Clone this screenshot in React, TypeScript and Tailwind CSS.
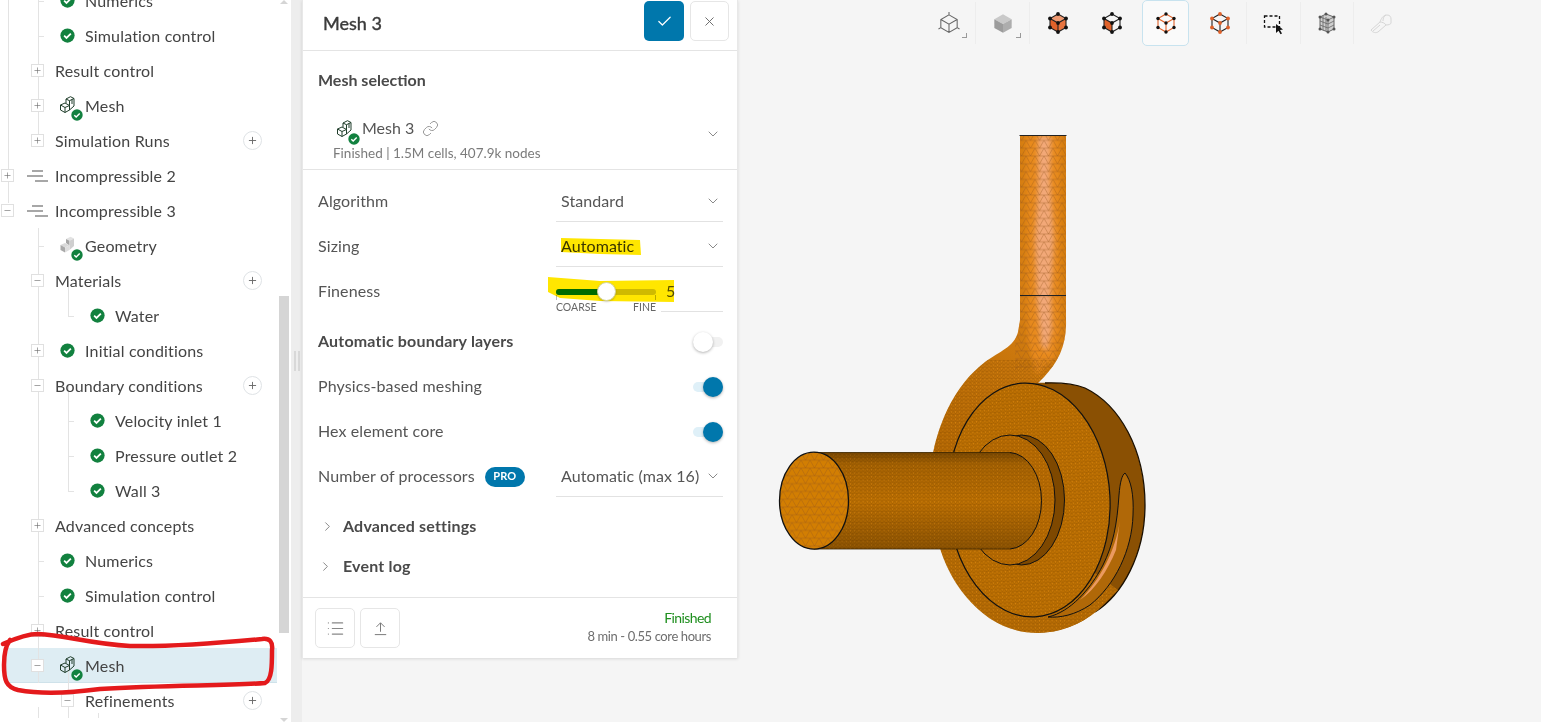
import { Check, ChevronDown, ChevronRight, Link, List, Minus, Plus, X } from "lucide-react";

const G0 = "left-[8px] top-0 bottom-0";
const G0_TOP = "left-[8px] top-0 h-[10px]";
const G1 = "left-[38px] top-0 bottom-0";
const G1_TOP = "left-[38px] top-0 h-1/2";
const G1_BOTTOM = "left-[38px] top-[24px] bottom-0";
const G2 = "left-[68px] top-0 bottom-0";
const G2_TOP = "left-[68px] top-0 h-1/2";
const G2_BOTTOM = "left-[68px] top-1/2 bottom-0";
const G3_BOTTOM = "left-[98px] top-[30px] bottom-0";

type Row = {
  label: string;
  level: 0 | 1 | 2;
  exp?: "+" | "-";
  icon?: "check" | "mesh" | "geo" | "sim";
  add?: boolean;
  selected?: boolean;
  guides: string[];
  elbow?: string;
};

const E1 = "left-[38px] w-[6px]";
const E2 = "left-[68px] w-[6px]";

const rows: Row[] = [
  { label: "Numerics", level: 1, icon: "check", guides: [G0, G1], elbow: E1 },
  { label: "Simulation control", level: 1, icon: "check", guides: [G0, G1], elbow: E1 },
  { label: "Result control", level: 1, exp: "+", guides: [G0, G1] },
  { label: "Mesh", level: 1, exp: "+", icon: "mesh", guides: [G0, G1] },
  { label: "Simulation Runs", level: 1, exp: "+", add: true, guides: [G0, G1_TOP] },
  { label: "Incompressible 2", level: 0, exp: "+", icon: "sim", guides: [G0] },
  { label: "Incompressible 3", level: 0, exp: "-", icon: "sim", guides: [G0_TOP] },
  { label: "Geometry", level: 1, icon: "geo", guides: [G1], elbow: E1 },
  { label: "Materials", level: 1, exp: "-", add: true, guides: [G1, G2_BOTTOM] },
  { label: "Water", level: 2, icon: "check", guides: [G1, G2_TOP], elbow: E2 },
  { label: "Initial conditions", level: 1, exp: "+", icon: "check", guides: [G1] },
  { label: "Boundary conditions", level: 1, exp: "-", add: true, guides: [G1, G2_BOTTOM] },
  { label: "Velocity inlet 1", level: 2, icon: "check", guides: [G1, G2], elbow: E2 },
  { label: "Pressure outlet 2", level: 2, icon: "check", guides: [G1, G2], elbow: E2 },
  { label: "Wall 3", level: 2, icon: "check", guides: [G1, G2_TOP], elbow: E2 },
  { label: "Advanced concepts", level: 1, exp: "+", guides: [G1] },
  { label: "Numerics", level: 1, icon: "check", guides: [G1], elbow: E1 },
  { label: "Simulation control", level: 1, icon: "check", guides: [G1], elbow: E1 },
  { label: "Result control", level: 1, exp: "+", guides: [G1] },
  { label: "Mesh", level: 1, exp: "-", icon: "mesh", selected: true, guides: [G1, G2_BOTTOM] },
  { label: "Refinements", level: 2, exp: "-", add: true, guides: [G1_BOTTOM, G2, G3_BOTTOM] },
];

const levelPad = { 0: "pl-[1px]", 1: "pl-[31px]", 2: "pl-[61px]" };

function CheckBadge({ className }: { className: string }) {
  return (
    <svg viewBox="0 0 16 16" className={className}>
      <circle cx="8" cy="8" r="7.6" fill="#12813f" />
      <path d="M4.4 8.2l2.5 2.4 4.7-4.6" fill="none" stroke="#fff" strokeWidth="1.9" />
    </svg>
  );
}

function MeshIcon() {
  return (
    <span className="relative block w-[22px] h-[22px]">
      <svg viewBox="0 0 15 17" className="w-[15px] h-[17px] mt-[2px]" fill="none" stroke="#1f3d2a" strokeWidth="1">
        <path d="M6 3l4.500-2.300L14 2.500 9.500 4.700zM6 3v4M9.500 4.700V9.500M14 2.500V10L9.500 14" />
        <path d="M.5 9L5 7l4.500 2.500L5 11.500zM.5 9v5L5 16.500V11.500M9.500 9.500V14L5 16.500M12 3.500V8" />
      </svg>
      <CheckBadge className="absolute left-[11px] top-[13px] w-[12px] h-[12px]" />
    </span>
  );
}

function GeoIcon() {
  return (
    <span className="relative block w-[22px] h-[22px]">
      <svg viewBox="0 0 15 17" className="w-[15px] h-[17px] mt-[2px]">
        <path d="M6 3l4.500-2.300L14 2.500 9.500 4.700z" fill="#e2e2e2" />
        <path d="M6 3v4l3.500 2.500V4.700z" fill="#a6a6a6" />
        <path d="M9.500 4.700L14 2.500V10l-4.500 4z" fill="#cfcfcf" />
        <path d="M.5 9L5 7l4.500 2.500L5 11.500z" fill="#d9d9d9" />
        <path d="M.5 9v5L5 16.500V11.500z" fill="#a9a9a9" />
        <path d="M5 11.500l4.500-2V14L5 16.500z" fill="#dedede" />
      </svg>
      <CheckBadge className="absolute left-[11px] top-[13px] w-[12px] h-[12px]" />
    </span>
  );
}

function SimIcon() {
  return (
    <svg viewBox="0 0 22 12" className="w-[22px] h-[12px] -ml-[3px]" stroke="#8a8a8a" strokeWidth="1.3">
      <path d="M5 1h11M0 6h16M8 11h13" />
    </svg>
  );
}

function TreeRow({ row }: { row: Row }) {
  return (
    <div className={`relative flex items-center h-[35px] text-[16px] tracking-[0.17px] text-[#444] ${levelPad[row.level]}`}>
      {row.selected && <div className="absolute left-[6px] right-[2px] top-0 bottom-0 bg-[#deedf3] border-b border-[#cfe2ea]" />}
      {row.guides.map((g) => (
        <span key={g} className={`absolute w-px bg-[#e3e3e3] ${g}`} />
      ))}
      {row.elbow && <span className={`absolute top-1/2 h-px bg-[#e3e3e3] ${row.elbow}`} />}
      <div className="relative w-[24px] shrink-0">
        {row.exp && (
          <span className="flex items-center justify-center w-[13px] h-[13px] bg-white border border-[#e0e0e0] text-[#666]">
            {row.exp === "+" ? <Plus size={9} strokeWidth={1.6} /> : <Minus size={9} strokeWidth={1.6} />}
          </span>
        )}
      </div>
      {row.icon && (
        <div className="relative ml-[5px] w-[25px] shrink-0">
          {row.icon === "check" && <CheckBadge className="w-[15px] h-[15px]" />}
          {row.icon === "mesh" && <MeshIcon />}
          {row.icon === "geo" && <GeoIcon />}
          {row.icon === "sim" && <SimIcon />}
        </div>
      )}
      <span className="relative whitespace-nowrap">{row.label}</span>
      {row.add && (
        <span className="absolute left-[243px] top-[8px] flex items-center justify-center w-[19px] h-[19px] rounded-full bg-white border border-[#dfe3e6] text-[#666]">
          <Plus size={11} strokeWidth={2} />
        </span>
      )}
    </div>
  );
}

function Sidebar() {
  return (
    <aside className="flex w-[291px] shrink-0 h-full bg-white">
      <div className="w-[279px] shrink-0 h-full overflow-hidden">
        <div className="-mt-[17px]">
          {rows.map((r, i) => (
            <TreeRow key={i} row={r} />
          ))}
        </div>
      </div>
      <div className="relative w-[10px] h-full">
        <span className="absolute left-[1px] top-0 w-0 h-0 border-x-[4px] border-x-transparent border-b-[4px] border-b-[#d5d5d5]" />
        <div className="mt-[296px] h-[337px] bg-[#d5d5d5]" />
        <span className="absolute left-[1px] bottom-0 w-0 h-0 border-x-[4px] border-x-transparent border-t-[4px] border-t-[#d5d5d5]" />
      </div>
    </aside>
  );
}

function Select({ value, highlight }: { value: string; highlight?: boolean }) {
  return (
    <div className={`flex items-center justify-between w-[167px] h-[41px] pl-[5px] pr-[2px] border-b border-[#e2e2e2] text-[16px] tracking-[0.08px] ${highlight ? "text-[#3a3a3a]" : "text-[#555]"}`}>
      <span className="whitespace-nowrap">{value}</span>
      <ChevronDown size={16} strokeWidth={1.3} className="text-[#777]" />
    </div>
  );
}

function Toggle({ on }: { on: boolean }) {
  return (
    <div className={`relative w-[30px] h-[10px] rounded-full ${on ? "bg-[#dff0f8]" : "bg-[#f1f1f1]"}`}>
      <span
        className={`absolute -top-[5px] w-[20px] h-[20px] rounded-full shadow-[0_1px_3px_rgba(0,0,0,0.3)] ${on ? "right-0 bg-[#0077ac]" : "left-0 bg-white"}`}
      />
    </div>
  );
}

function SettingRow({ label, bold, children, className }: { label: React.ReactNode; bold?: boolean; children: React.ReactNode; className?: string }) {
  return (
    <div className={`flex items-center justify-between h-[45px] ${className ?? ""}`}>
      <div className={`flex items-center -mt-[2px] text-[16px] ${bold ? "font-bold tracking-[0.18px] text-[#4a4a4a]" : "tracking-[0.11px] text-[#555]"}`}>{label}</div>
      {children}
    </div>
  );
}

function Panel() {
  return (
    <section className="flex flex-col w-[436px] shrink-0 h-[658px] bg-white border-x border-[#e8e8e8] shadow-[0_1px_3px_rgba(0,0,0,0.12)]">
      <header className="flex items-center justify-between h-[51px] pl-[20px] pr-[8px] border-b border-[#e4e4e4]">
        <h1 className="-mt-[4px] text-[18px] font-medium [-webkit-text-stroke:0.3px_#3c3c3c] text-[#3c3c3c]">Mesh 3</h1>
        <div className="flex gap-[6px] -mt-[8px]">
          <button className="flex items-center justify-center w-[40px] h-[40px] rounded-[5px] bg-[#0077ac] text-white">
            <Check size={17} strokeWidth={1.7} />
          </button>
          <button className="flex items-center justify-center w-[39px] h-[40px] rounded-[5px] bg-white border border-[#e6e6e6] text-[#666]">
            <X size={15} strokeWidth={1.5} />
          </button>
        </div>
      </header>

      <div className="h-[119px] border-b border-[#e4e4e4] px-[15px] pt-[19px]">
        <h2 className="h-[20px] leading-[20px] text-[16px] font-bold text-[#4a4a4a]">Mesh selection</h2>
        <div className="flex items-start justify-between pl-[15px] pr-[2px] mt-[28px]">
          <div>
            <div className="flex items-center h-[20px] text-[16px] text-[#555]">
              <span className="relative w-[29px] pl-[4px] h-[20px] shrink-0"><MeshIcon /></span>
              <span>Mesh 3</span>
              <Link size={17} strokeWidth={1.2} className="ml-[8px] text-[#888]" />
            </div>
            <p className="mt-[5px] text-[13.5px] leading-[20px] text-[#7b7b7b] whitespace-nowrap">Finished | 1.5M cells, 407.9k nodes</p>
          </div>
          <ChevronDown size={16} strokeWidth={1.3} className="text-[#777] mt-[8px] -mr-[1px]" />
        </div>
      </div>

      <div className="flex-1 pl-[15px] pr-[14px] pt-[9px]">
        <SettingRow label="Algorithm"><Select value="Standard" /></SettingRow>
        <SettingRow label="Sizing"><Select value="Automatic" highlight /></SettingRow>
        <SettingRow label="Fineness" className="mb-[5px]">
          <div className="flex w-[167px] h-[41px]">
            <div className="relative w-[100px] h-full">
              <div className="absolute left-0 top-[18px] w-full h-[6px] rounded-full bg-[#cfcfcf] overflow-hidden">
                <div className="w-[50px] h-full bg-[#0077ac]" />
              </div>
              <span className="absolute left-0 top-[24px] w-px h-[5px] bg-[#bbb]" />
              <span className="absolute right-0 top-[24px] w-px h-[5px] bg-[#bbb]" />
              <span className="absolute left-[41px] top-[11px] z-20 w-[19px] h-[19px] rounded-full bg-white border border-[#d6d6a0] shadow-[0_1px_2px_rgba(0,0,0,0.2)]" />
              <div className="absolute left-0 right-0 top-[30px] flex justify-between text-[10.5px] leading-[13px] text-[#666]">
                <span>COARSE</span>
                <span>FINE</span>
              </div>
            </div>
            <div className="ml-[5px] flex-1 border-b border-[#e2e2e2] pl-[5px] text-[16px] leading-[20px] pt-[10px] text-[#555]">5</div>
          </div>
        </SettingRow>
        <SettingRow label="Automatic boundary layers" bold><Toggle on={false} /></SettingRow>
        <SettingRow label="Physics-based meshing"><Toggle on /></SettingRow>
        <SettingRow label="Hex element core"><Toggle on /></SettingRow>
        <SettingRow
          label={
            <>
              Number of processors
              <span className="ml-[10px] mt-[2px] flex items-center justify-center w-[40px] h-[20px] rounded-full bg-[#0077ac] text-white text-[11px] font-bold">PRO</span>
            </>
          }
        >
          <Select value="Automatic (max 16)" />
        </SettingRow>
        <div className="flex items-center h-[40px] mt-[7px] text-[16px] font-bold tracking-[0.18px] text-[#4a4a4a]">
          <ChevronRight size={15} strokeWidth={1.4} className="ml-[2px] text-[#777]" />
          <span className="ml-[8px]">Advanced settings</span>
        </div>
        <div className="flex items-center h-[40px] text-[16px] font-bold tracking-[0.18px] text-[#4a4a4a]">
          <ChevronRight size={15} strokeWidth={1.4} className="text-[#777]" />
          <span className="ml-[10px]">Event log</span>
        </div>
      </div>

      <footer className="flex items-center justify-between h-[61px] pl-[12px] pr-[26px] border-t border-[#e4e4e4]">
        <div className="flex gap-[5px]">
          <button className="flex items-center justify-center w-[40px] h-[40px] rounded-[5px] border border-[#e6e6e6] text-[#888]">
            <List size={19} strokeWidth={1.5} />
          </button>
          <button className="flex items-center justify-center w-[40px] h-[40px] rounded-[5px] border border-[#e6e6e6] text-[#777]">
            <svg viewBox="0 0 16 18" className="w-[13px] h-[15px]" fill="none" stroke="currentColor" strokeWidth="1.2">
              <path d="M8 13V2M3 7l5-5 5 5M1 16.500h14" />
            </svg>
          </button>
        </div>
        <div className="text-right -mt-[3px]">
          <div className="text-[14px] leading-[19px] tracking-[-0.6px] text-[#1f8f1f]">Finished</div>
          <div className="text-[13px] leading-[19px] tracking-[-0.4px] text-[#6e6e6e]">8 min - 0.55 core hours</div>
        </div>
      </footer>
    </section>
  );
}

const DOTS: [number, number][] = [[12, 3], [20, 7.5], [20, 16.5], [12, 21], [4, 16.5], [4, 7.5], [12, 12]];

function Cube({ variant }: { variant: "solid" | "face" | "edges" | "points" }) {
  const edge = variant === "edges" ? "#e0622a" : "#222";
  const dot = variant === "points" ? "#e0622a" : "#111";
  return (
    <svg viewBox="0 0 24 24" className="w-[24px] h-[24px]">
      {variant === "solid" && (
        <>
          <path d="M12 3l8 4.500-8 4.500-8-4.500z" fill="#f09a72" />
          <path d="M4 7.500l8 4.500v9l-8-4.500z" fill="#e0622a" />
          <path d="M20 7.500l-8 4.500v9l8-4.500z" fill="#e87540" />
        </>
      )}
      {variant === "face" && <path d="M4 7.500l8 4.500v9l-8-4.500z" fill="#e0622a" />}
      <path d="M12 3l8 4.500v9L12 21l-8-4.500v-9zM4 7.500l8 4.500 8-4.500M12 12v9" fill="none" stroke={edge} strokeWidth="1.1" />
      {DOTS.map(([x, y]) => (
        <circle key={`${x}-${y}`} cx={x} cy={y} r={variant === "edges" ? 1.7 : 1.9} fill={dot} />
      ))}
    </svg>
  );
}

function Corner() {
  return <span className="absolute right-[9px] bottom-[8px] w-[5px] h-[5px] border-r border-b border-[#999]" />;
}

function Sep() {
  return <span className="absolute right-0 top-[2px] bottom-[2px] w-px bg-[#ededed]" />;
}

function Toolbar() {
  const cell = "relative flex items-center justify-center h-[46px] w-[54px] shrink-0";
  return (
    <div className="flex ml-[184px] h-[46px]">
      <div className={cell}>
        <svg viewBox="0 0 24 24" className="w-[28px] h-[28px]" fill="none" stroke="#666" strokeWidth="0.9">
          <path d="M12 5l7 4v7l-7 4-7-4V9zM5 9l7 4 7-4M12 13v7M12 5V2.500M19 16l2 1.200M5 16l-2 1.200" />
        </svg>
        <Corner />
        <Sep />
      </div>
      <div className={cell}>
        <svg viewBox="0 0 24 24" className="w-[26px] h-[26px]">
          <path d="M12 4l8 4.500-8 4.500-8-4.500z" fill="#c9c9c9" />
          <path d="M4 8.500l8 4.500v8l-8-4.500z" fill="#9c9c9c" />
          <path d="M20 8.500l-8 4.500v8l8-4.500z" fill="#adadad" />
        </svg>
        <Corner />
        <Sep />
      </div>
      <div className={`${cell} ml-[1px]`}><Cube variant="solid" /></div>
      <div className={cell}><Cube variant="face" /></div>
      <div className={cell}>
        <div className="flex items-center justify-center -ml-[1px] w-[47px] h-[46px] rounded-[5px] border border-[#c8e3ef] bg-[#fafafa]">
          <Cube variant="edges" />
        </div>
      </div>
      <div className={cell}><Cube variant="points" /><Sep /></div>
      <div className={cell}>
        <svg viewBox="0 0 24 24" className="w-[24px] h-[24px]">
          <rect x="2.500" y="5" width="15" height="11" fill="none" stroke="#111" strokeWidth="1.3" strokeDasharray="3 2" />
          <path d="M14 13l0 9 2.500-2.200 2 3.500 1.500-.8-2-3.500 3-.5z" fill="#111" />
        </svg>
        <Sep />
      </div>
      <div className={`${cell} -ml-[1px]`}>
        <svg viewBox="0 0 24 24" className="w-[24px] h-[24px]" fill="none" stroke="#666" strokeWidth="1">
          <path d="M5 6l6-3 8 3v12l-6 3-8-3z" fill="#aaa" fillOpacity="0.5" />
          <path d="M5 6l8 3v12M13 9l6-3M8 5v14M11 6v14M5 10l8 3M5 14l8 3M13 13l6-3M13 17l6-3" strokeWidth="0.8" />
          {[[5, 6], [11, 3], [19, 6], [19, 18], [13, 21], [5, 18], [13, 9]].map(([x, y]) => (
            <circle key={`${x}-${y}`} cx={x} cy={y} r="1.500" fill="#555" stroke="none" />
          ))}
        </svg>
        <Sep />
      </div>
      <div className={cell}>
        <svg viewBox="0 0 24 24" className="w-[24px] h-[24px]" fill="none" stroke="#d6d6d6" strokeWidth="1">
          <path d="M2 19l9-8c1-3 3-7 7-7 3 0 4 2 4 4v4c0 1-2 2-5 2l-8 7c-2 1-5 1-7-2z" />
          <path d="M11 11c2 0 5 1 6 3M17 4c-2 1-3 3-3 6M4 20l7-6" />
        </svg>
      </div>
    </div>
  );
}

function Meshed({ d, fill, mesh = "url(#fine)" }: { d: string; fill: string; mesh?: string }) {
  return (
    <>
      <path d={d} fill={fill} />
      <path d={d} fill={mesh} />
    </>
  );
}

function Pump() {
  const pipe = "M1020 136L1066 136L1066 320C1067 345 1058 362 1044 377L1034 387L1000 500L933 470L933 453C940 420 955 385 985 362C1000 351 1014 347 1018 332L1020 320Z";
  const shaft = "M814 452.500L1010 452.500A33 48.300 0 0 1 1010 549L814 549Z";
  return (
    <svg viewBox="760 120 400 530" className="absolute left-[22px] top-[120px] w-[400px] h-[530px]">
      <defs>
        <pattern id="fine" width="4.200" height="3.600" patternUnits="userSpaceOnUse">
          <path d="M0 0h4.200M0 0l2.100 3.600L4.200 0" stroke="#8a4e00" strokeWidth="0.5" fill="none" opacity="0.65" />
          <path d="M2.100 .9v1.300" stroke="#e68e12" strokeWidth="1" opacity="0.6" />
        </pattern>
        <pattern id="coarse" width="9" height="7.800" patternUnits="userSpaceOnUse">
          <path d="M0 0h9M0 0l4.500 7.800L9 0M0 7.800h9" stroke="#97561c" strokeWidth="0.6" fill="none" opacity="0.6" />
        </pattern>
        <clipPath id="pipeClip">
          <path d={pipe} />
        </clipPath>
        <filter id="soft" x="-50%" y="-10%" width="200%" height="120%">
          <feGaussianBlur stdDeviation="2.500" />
        </filter>
        <linearGradient id="voluteFill" gradientUnits="userSpaceOnUse" x1="930" y1="470" x2="1060" y2="300">
          <stop offset="0" stopColor="#b26602" />
          <stop offset="0.55" stopColor="#c4730a" />
          <stop offset="0.85" stopColor="#d67e12" />
          <stop offset="1" stopColor="#d67e12" />
        </linearGradient>
        <linearGradient id="shaftShade" x1="0" x2="0" y1="0" y2="1">
          <stop offset="0" stopColor="#000" stopOpacity="0.35" />
          <stop offset="0.12" stopColor="#000" stopOpacity="0.12" />
          <stop offset="0.5" stopColor="#000" stopOpacity="0" />
          <stop offset="1" stopColor="#000" stopOpacity="0.25" />
        </linearGradient>
      </defs>

      <path d={pipe} fill="url(#voluteFill)" />
      <g clipPath="url(#pipeClip)">
        <path d="M1026 136H1060V330L1054 360L1036 375L1028 340Z" fill="#e88a1c" filter="url(#soft)" />
        <path d="M1038 136H1051L1050 180L1054 240L1051 295L1052 330L1047 352L1041 345L1037 300L1035 240L1038 190Z" fill="#f2a878" filter="url(#soft)" />
        <rect x="1015" y="130" width="60" height="240" fill="url(#coarse)" />
        <path d="M925 360H1060V480H925Z" fill="url(#fine)" />
      </g>
      <path d="M1019.500 135.500H1066.500" stroke="#222" strokeWidth="1.200" />
      <path d="M1020 295.500H1066" stroke="#222" strokeWidth="1" />

      <path d="M1023 384C1040 382 1070 382 1085 388C1120 405 1145 450 1145 505C1145 555 1122 595 1095 612C1080 625 1060 632 1037 633L1037 500Z" fill="#8a5003" />
      <path d="M1045 383C1060 382.500 1075 384 1085 388C1120 405 1145 450 1145 505C1145 555 1122 595 1095 612" fill="none" stroke="#1a0f00" strokeWidth="1.300" />
      <Meshed d="M939 545C950 585 985 633 1037 633C1060 633 1082 624 1098 610L1118 590L1050 540Z" fill="#b76c04" />

      <g transform="rotate(-3 1029 500)">
        <ellipse cx="1029" cy="500" rx="81" ry="117" fill="#bd7002" />
        <ellipse cx="1029" cy="500" rx="81" ry="117" fill="url(#fine)" stroke="#111" strokeWidth="1.200" />
      </g>

      <path d="M1125 473C1131 480 1134 495 1133 515C1132 550 1115 585 1090 605C1075 615 1060 618 1048 617C1070 612 1090 590 1103 565C1113 545 1117 525 1119 495C1120 482 1122 475 1125 473Z" fill="#b06808" stroke="#111" strokeWidth="1" />
      <path d="M1120 520C1116 550 1100 580 1080 600C1095 590 1108 570 1116 550Z" fill="#eb9a60" />

      <ellipse cx="1021.500" cy="500" rx="43" ry="65" fill="#7e4800" stroke="#111" strokeWidth="1" />
      <ellipse cx="1010" cy="500" rx="45" ry="65" fill="#b86b02" />
      <ellipse cx="1010" cy="500" rx="45" ry="65" fill="url(#fine)" stroke="#111" strokeWidth="1" />

      <Meshed d={shaft} fill="#bd7002" />
      <path d={shaft} fill="url(#shaftShade)" />
      <path d="M814 452.500H1010M814 549H1010" stroke="#3a2400" strokeWidth="0.800" />
      <path d="M1010 452.500A33 48.300 0 0 1 1010 549" fill="none" stroke="#111" strokeWidth="1" />

      <ellipse cx="814" cy="500.700" rx="34.500" ry="48.500" fill="#d27e02" />
      <ellipse cx="814" cy="500.700" rx="34.500" ry="48.500" fill="url(#coarse)" stroke="#111" strokeWidth="1.300" />
    </svg>
  );
}

export default function App() {
  return (
    <div className="relative flex w-[1541px] h-[722px] overflow-hidden bg-[#f5f5f5] font-['Lato',sans-serif]">
      <Sidebar />
      <div className="flex items-center justify-center gap-[2px] w-[11px] shrink-0 bg-[#ededed]">
        <span className="w-[2px] h-[20px] bg-[#d8d8d8]" />
        <span className="w-[2px] h-[20px] bg-[#d8d8d8]" />
      </div>
      <Panel />
      <main className="relative flex-1">
        <Toolbar />
        <Pump />
      </main>

      {/* marker scribbles drawn on top of the screenshot */}
      <svg viewBox="0 0 1541 722" className="absolute left-0 top-0 w-[1541px] h-[722px] pointer-events-none z-10 mix-blend-multiply">
        <path d="M561 238L640 240L641 255L600 254L561 252Z" fill="#ffe600" />
        <path d="M548 277L600 281L674 280L674 302L600 301L560 298L548 292Z" fill="#ffe600" />
      </svg>
      <svg viewBox="0 0 1541 722" className="absolute left-0 top-0 w-[1541px] h-[722px] pointer-events-none z-30">
        <path
          d="M3 644C12 640 25 634 38 634C65 635 90 644 130 646C180 647 230 642 262 639C270 638 273 642 272 650C272 665 272 680 265 683C230 686 170 685 100 689C70 693 40 694 18 690C6 687 4 680 4 665C4 655 6 645 10 640"
          fill="none"
          stroke="#e41a1c"
          strokeWidth="4.500"
          strokeLinecap="round"
        />
      </svg>
    </div>
  );
}
